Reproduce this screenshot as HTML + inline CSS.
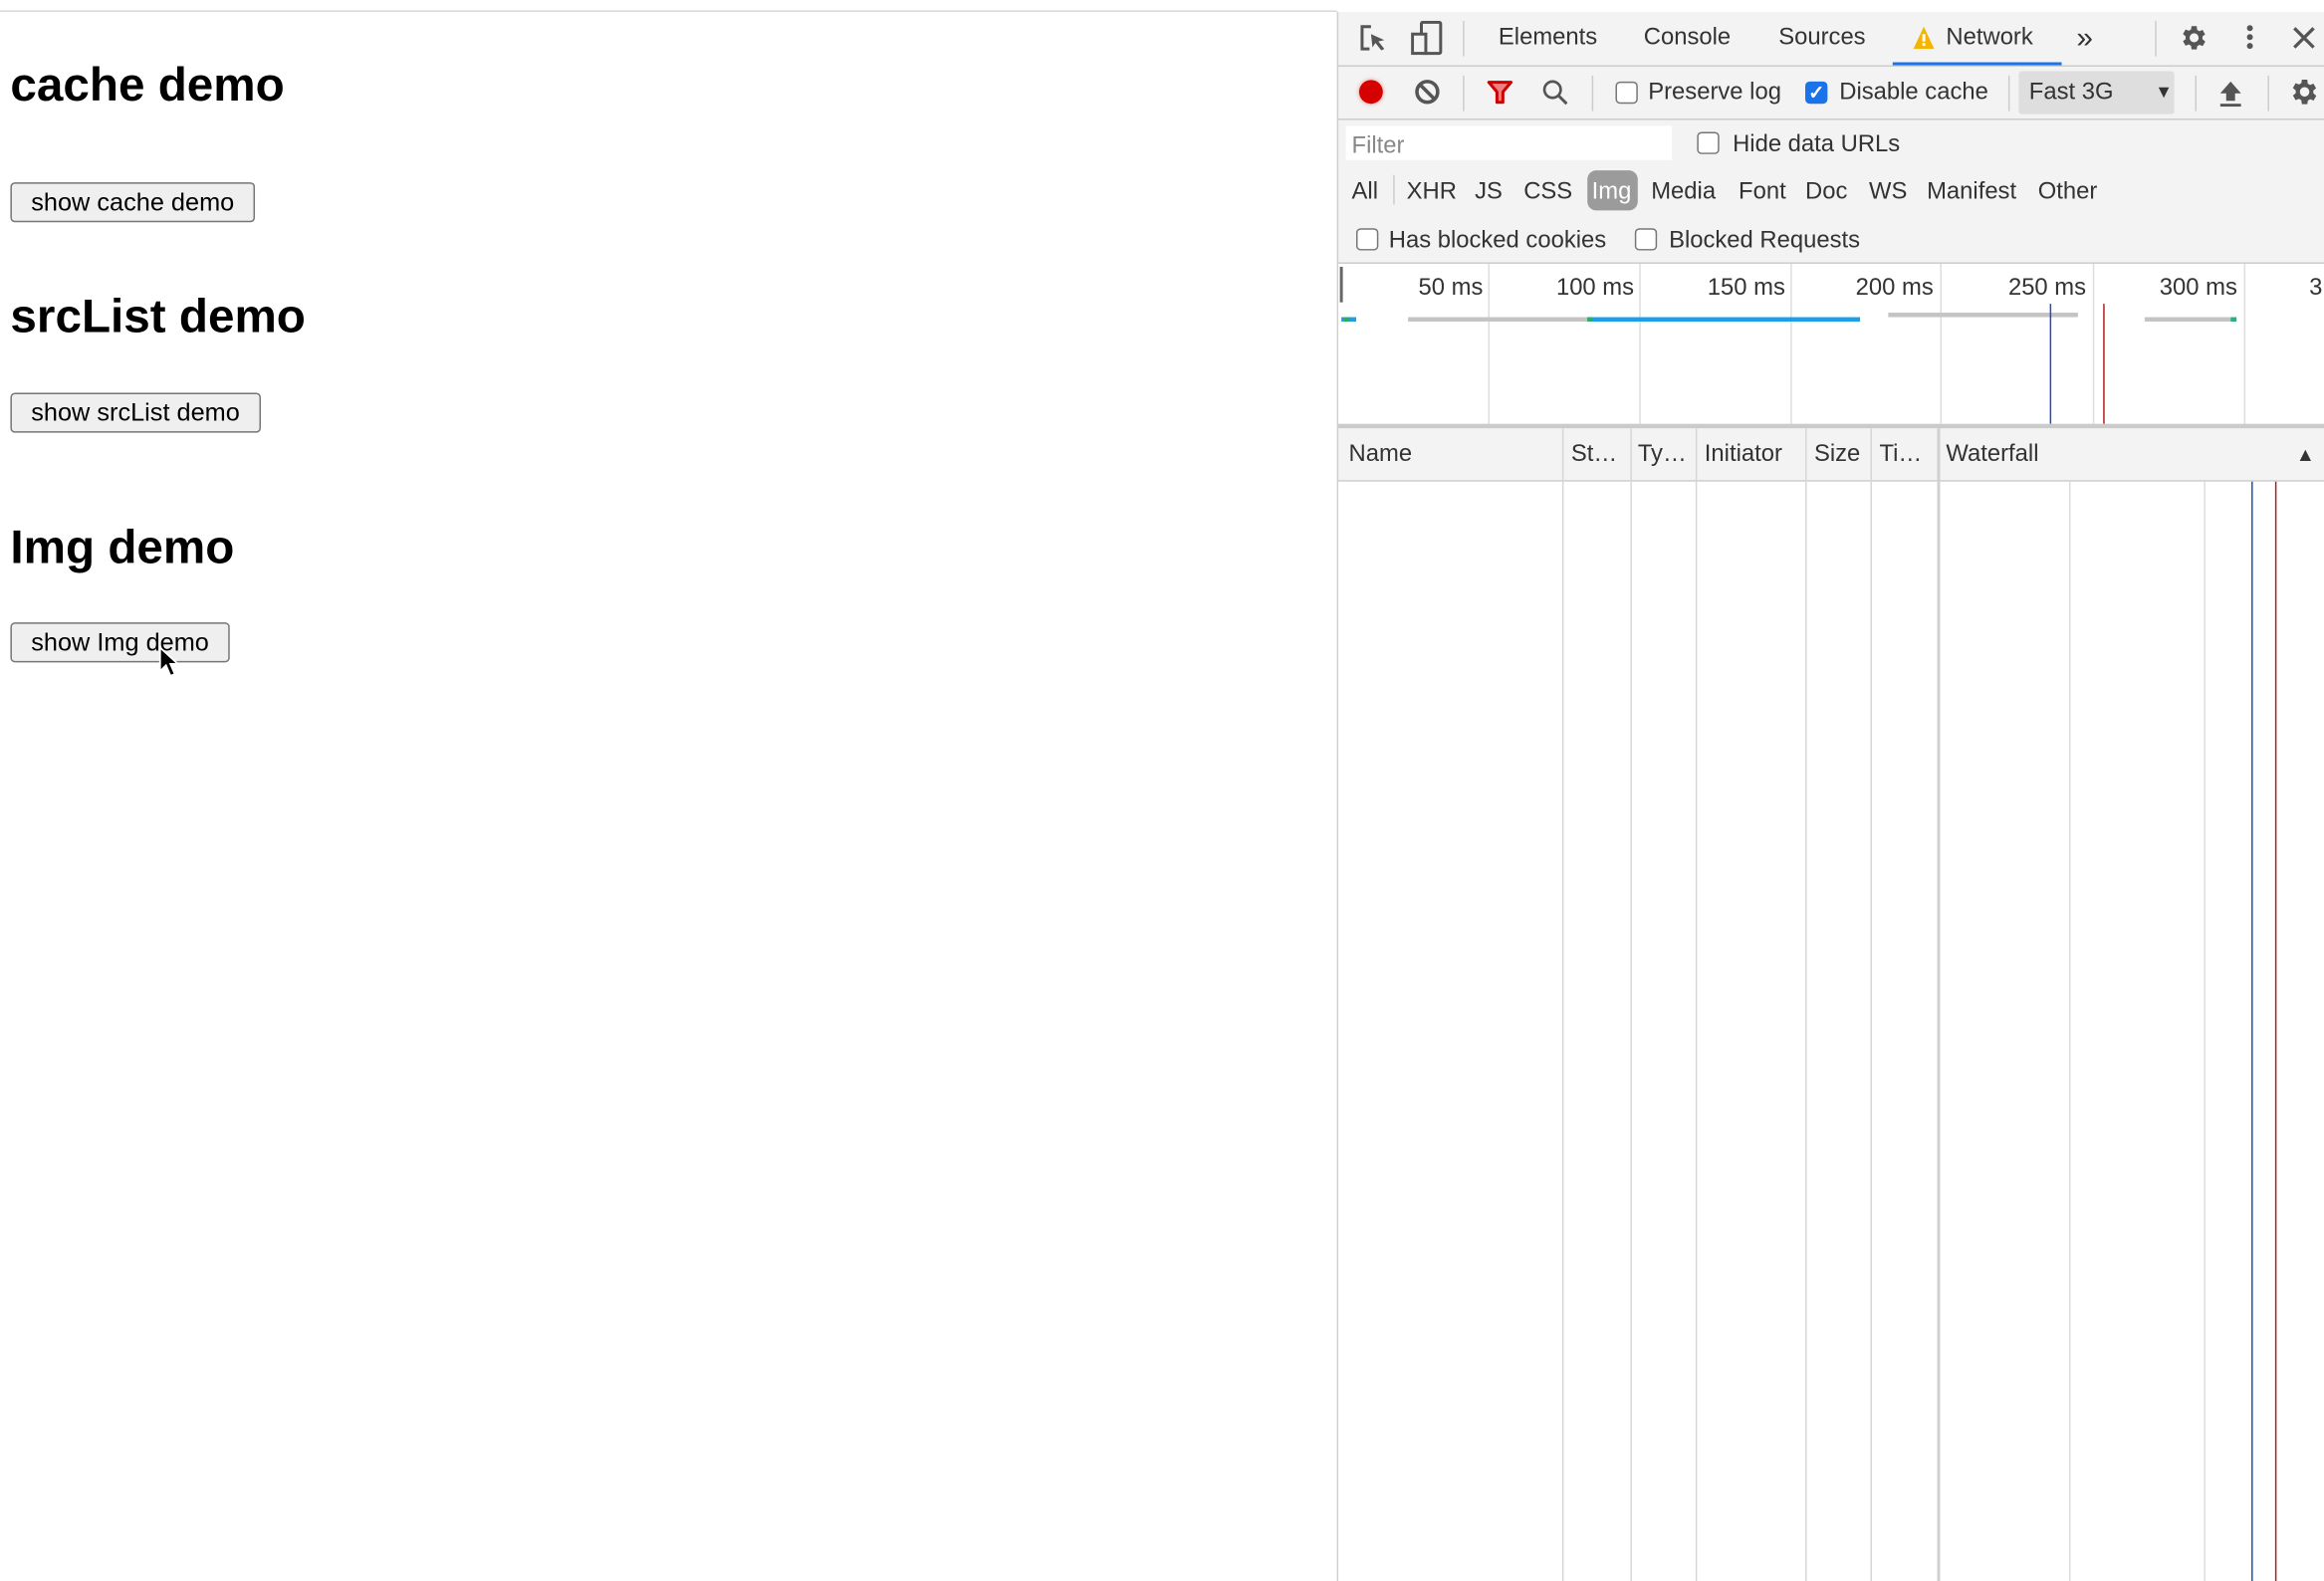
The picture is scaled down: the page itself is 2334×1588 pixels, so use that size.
<!DOCTYPE html>
<html><head><meta charset="utf-8">
<style>
html,body{margin:0;padding:0;background:#fff;overflow:hidden;width:2334px;height:1588px}
#w{position:absolute;left:0;top:0;width:1568px;height:1067px;transform:scale(1.48852);transform-origin:0 0;font-family:"Liberation Sans",Arial,sans-serif;}
.a{position:absolute;white-space:nowrap}
h1{position:absolute;margin:0;font-size:32px;font-weight:bold;left:7px;color:#000}
.btn{position:absolute;left:7px;height:25px;border:1px solid #767676;border-radius:3px;background:#efefef;font-size:17px;line-height:25px;padding:0 13px;box-sizing:content-box}
#dt{position:absolute;left:902px;top:8px;width:666px;height:1059px;background:#f3f3f3;border-left:1px solid #cfcfcf}
.t{position:absolute;font-size:16px;color:#333;white-space:nowrap;margin-top:1px}
.sep{position:absolute;width:1px;background:#ccc}
.cb{position:absolute;width:13px;height:13px;border:1px solid #767676;border-radius:3px;background:#fff}
.hl{position:absolute;left:0;width:666px;height:1px;background:#cbcbcb}
.vl{position:absolute;width:1px;background:#ddd}
</style></head><body>
<div id="w">
<div class="a" style="left:0;top:7px;width:902px;height:1px;background:#d6d6d6"></div>
<h1 style="top:39px">cache demo</h1>
<div class="btn" style="top:123px">show cache demo</div>
<h1 style="top:195px">srcList demo</h1>
<div class="btn" style="top:265px">show srcList demo</div>
<h1 style="top:351px">Img demo</h1>
<div class="btn" style="top:420px">show Img demo</div>
<svg class="a" style="left:107px;top:436px" width="16" height="24" viewBox="0 0 16 24"><path d="M1 1 L1 17 L5 13 L8 20 L11 19 L8 12 L13 12 Z" fill="#000" stroke="#fff" stroke-width="1.2"/></svg>

<div id="dt">
<svg class="a" style="left:14px;top:8px" width="20" height="20" viewBox="0 0 20 20"><path d="M8 2H2v15h5" fill="none" stroke="#555" stroke-width="2"/><path d="M8 7l9 4-4 1 4 5-2 1-4-5-2 3z" fill="#555"/></svg>
<svg class="a" style="left:49px;top:6px" width="22" height="24" viewBox="0 0 22 24"><rect x="7" y="1" width="13" height="21" rx="1" fill="none" stroke="#555" stroke-width="2"/><rect x="1" y="9" width="9" height="13" fill="#f3f3f3" stroke="#555" stroke-width="2"/></svg>
<div class="sep" style="left:84px;top:6px;height:24px"></div>
<div class="t" style="left:108px;top:8px">Elements</div>
<div class="t" style="left:206px;top:8px">Console</div>
<div class="t" style="left:297px;top:8px">Sources</div>
<svg class="a" style="left:388px;top:10px" width="14" height="15" viewBox="0 0 14 15"><path d="M7 0L14 15H0Z" fill="#f4b400"/><rect x="6" y="5" width="2" height="5" fill="#fff"/><rect x="6" y="11" width="2" height="2" fill="#fff"/></svg>
<div class="t" style="left:410px;top:8px">Network</div>
<div class="a" style="left:374px;top:34px;width:114px;height:2px;background:#1a73e8"></div>
<div class="t" style="left:498px;top:6px;font-size:20px">»</div>
<div class="sep" style="left:551px;top:6px;height:24px"></div>
<svg class="a" style="left:566px;top:7px" width="21" height="21" viewBox="0 0 24 24"><path fill="#555" d="M19.4 13a7.5 7.5 0 000-2l2.1-1.6-2-3.5-2.5 1a7.3 7.3 0 00-1.7-1L15 3h-4l-.4 2.6a7.3 7.3 0 00-1.7 1l-2.5-1-2 3.5L6.5 11a7.5 7.5 0 000 2l-2.1 1.6 2 3.5 2.5-1a7.3 7.3 0 001.7 1L11 21h4l.4-2.6a7.3 7.3 0 001.7-1l2.5 1 2-3.5zM13 15.5a3.5 3.5 0 110-7 3.5 3.5 0 010 7z"/></svg>
<div class="a" style="left:613px;top:9px;width:4px;height:4px;border-radius:2px;background:#555;box-shadow:0 6px 0 #555,0 12px 0 #555"></div>
<svg class="a" style="left:644px;top:10px" width="15" height="15" viewBox="0 0 15 15"><path d="M1 1L14 14M14 1L1 14" stroke="#555" stroke-width="2.2"/></svg>
<div class="hl" style="top:36px"></div>
<div class="a" style="left:14px;top:46px;width:16px;height:16px;border-radius:8px;background:#d50000;box-shadow:0 0 3px #f08080"></div>
<svg class="a" style="left:51px;top:45px" width="18" height="18" viewBox="0 0 18 18"><circle cx="9" cy="9" r="7" fill="none" stroke="#555" stroke-width="2.4"/><path d="M4 4L14 14" stroke="#555" stroke-width="2.4"/></svg>
<div class="sep" style="left:84px;top:43px;height:24px"></div>
<svg class="a" style="left:100px;top:46px" width="18" height="17" viewBox="0 0 18 17"><path d="M1.5 1.5h15L11 8v7H7V8z" fill="#f08080" stroke="#c00" stroke-width="2" stroke-linejoin="round"/></svg>
<svg class="a" style="left:137px;top:45px" width="19" height="19" viewBox="0 0 19 19"><circle cx="7.5" cy="7.5" r="5.5" fill="none" stroke="#555" stroke-width="1.8"/><path d="M11.5 11.5L17 17" stroke="#555" stroke-width="2"/></svg>
<div class="sep" style="left:171px;top:43px;height:24px"></div>
<div class="cb" style="left:187px;top:47px"></div>
<div class="t" style="left:209px;top:45px">Preserve log</div>
<div class="a" style="left:315px;top:47px;width:15px;height:15px;border-radius:3px;background:#1a73e8;color:#fff;font-size:13px;line-height:15px;text-align:center;font-weight:bold">✓</div>
<div class="t" style="left:338px;top:45px">Disable cache</div>
<div class="sep" style="left:452px;top:43px;height:24px"></div>
<div class="a" style="left:459px;top:40px;width:105px;height:29px;background:#dedede;border-radius:2px"></div>
<div class="t" style="left:466px;top:45px">Fast 3G</div>
<div class="t" style="left:551px;top:46px;font-size:12px">▼</div>
<div class="sep" style="left:578px;top:43px;height:24px"></div>
<svg class="a" style="left:594px;top:46px" width="16" height="18" viewBox="0 0 16 18"><path d="M8 1L15 9H11V14H5V9H1Z" fill="#555"/><rect x="1" y="16" width="14" height="2" fill="#555"/></svg>
<div class="sep" style="left:627px;top:43px;height:24px"></div>
<svg class="a" style="left:640px;top:43px" width="22" height="22" viewBox="0 0 24 24"><path fill="#555" d="M19.4 13a7.5 7.5 0 000-2l2.1-1.6-2-3.5-2.5 1a7.3 7.3 0 00-1.7-1L15 3h-4l-.4 2.6a7.3 7.3 0 00-1.7 1l-2.5-1-2 3.5L6.5 11a7.5 7.5 0 000 2l-2.1 1.6 2 3.5 2.5-1a7.3 7.3 0 001.7 1L11 21h4l.4-2.6a7.3 7.3 0 001.7-1l2.5 1 2-3.5zM13 15.5a3.5 3.5 0 110-7 3.5 3.5 0 010 7z"/></svg>
<div class="hl" style="top:72px"></div>
<div class="a" style="left:5px;top:77px;width:220px;height:23px;background:#fff"></div>
<div class="t" style="left:9px;top:81px;color:#888">Filter</div>
<div class="cb" style="left:242px;top:81px"></div>
<div class="t" style="left:266px;top:80px">Hide data URLs</div>
<div class="t" style="left:9px;top:112px">All</div>
<div class="sep" style="left:37px;top:110px;height:20px"></div>
<div class="t" style="left:46px;top:112px">XHR</div>
<div class="t" style="left:92px;top:112px">JS</div>
<div class="t" style="left:125px;top:112px">CSS</div>
<div class="a" style="left:168px;top:107px;width:34px;height:27px;border-radius:6px;background:#9b9b9b"></div>
<div class="t" style="left:171px;top:112px;color:#fff">Img</div>
<div class="t" style="left:211px;top:112px">Media</div>
<div class="t" style="left:270px;top:112px">Font</div>
<div class="t" style="left:315px;top:112px">Doc</div>
<div class="t" style="left:358px;top:112px">WS</div>
<div class="t" style="left:397px;top:112px">Manifest</div>
<div class="t" style="left:472px;top:112px">Other</div>
<div class="cb" style="left:12px;top:146px"></div>
<div class="t" style="left:34px;top:145px">Has blocked cookies</div>
<div class="cb" style="left:200px;top:146px"></div>
<div class="t" style="left:223px;top:145px">Blocked Requests</div>
<div class="hl" style="top:169px"></div>
<div class="a" style="left:0;top:170px;width:666px;height:108px;background:#fff"></div>
<div class="a" style="left:1px;top:172px;width:2px;height:24px;background:#666"></div>
<div class="vl" style="left:101px;top:170px;height:108px"></div>
<div class="vl" style="left:203px;top:170px;height:108px"></div>
<div class="vl" style="left:305px;top:170px;height:108px"></div>
<div class="vl" style="left:406px;top:170px;height:108px"></div>
<div class="vl" style="left:509px;top:170px;height:108px"></div>
<div class="vl" style="left:611px;top:170px;height:108px"></div>
<div class="t" style="left:54px;top:177px">50 ms</div>
<div class="t" style="left:147px;top:177px">100 ms</div>
<div class="t" style="left:249px;top:177px">150 ms</div>
<div class="t" style="left:349px;top:177px">200 ms</div>
<div class="t" style="left:452px;top:177px">250 ms</div>
<div class="t" style="left:554px;top:177px">300 ms</div>
<div class="t" style="left:655px;top:177px">3</div>
<div class="a" style="left:2px;top:206px;width:10px;height:3px;background:#1a9fe8"></div>
<div class="a" style="left:4px;top:206px;width:3px;height:3px;background:#2ab050"></div>
<div class="a" style="left:47px;top:206px;width:121px;height:3px;background:#c4c4c4"></div>
<div class="a" style="left:168px;top:206px;width:184px;height:3px;background:#1a9fe8"></div>
<div class="a" style="left:168px;top:206px;width:3px;height:3px;background:#2ab050"></div>
<div class="a" style="left:371px;top:203px;width:128px;height:3px;background:#c4c4c4"></div>
<div class="a" style="left:544px;top:206px;width:58px;height:3px;background:#c4c4c4"></div>
<div class="a" style="left:602px;top:206px;width:4px;height:3px;background:#2ab080"></div>
<div class="a" style="left:480px;top:197px;width:1px;height:81px;background:#1a4fc0"></div>
<div class="a" style="left:516px;top:197px;width:1px;height:81px;background:#b01c1c"></div>
<div class="a" style="left:0;top:278px;width:666px;height:3px;background:#cbcbcb"></div>
<div class="t" style="left:7px;top:289px">Name</div>
<div class="t" style="left:157px;top:289px">St…</div>
<div class="t" style="left:202px;top:289px">Ty…</div>
<div class="t" style="left:247px;top:289px">Initiator</div>
<div class="t" style="left:321px;top:289px">Size</div>
<div class="t" style="left:365px;top:289px">Ti…</div>
<div class="t" style="left:410px;top:289px">Waterfall</div>
<div class="t" style="left:646px;top:290px;font-size:13px">▲</div>
<div class="hl" style="top:316px"></div>
<div class="a" style="left:0;top:317px;width:666px;height:742px;background:#fff"></div>
<div class="vl" style="left:151px;top:281px;height:778px;background:#d6d6d6"></div>
<div class="vl" style="left:197px;top:281px;height:778px;background:#d6d6d6"></div>
<div class="vl" style="left:241px;top:281px;height:778px;background:#d6d6d6"></div>
<div class="vl" style="left:315px;top:281px;height:778px;background:#d6d6d6"></div>
<div class="vl" style="left:359px;top:281px;height:778px;background:#d6d6d6"></div>
<div class="vl" style="left:404px;top:281px;height:778px;width:2px;background:#d0d0d0"></div>
<div class="vl" style="left:493px;top:317px;height:742px"></div>
<div class="vl" style="left:584px;top:317px;height:742px"></div>
<div class="a" style="left:616px;top:317px;width:1px;height:742px;background:#1a4fc0"></div>
<div class="a" style="left:632px;top:317px;width:1px;height:742px;background:#b01c1c"></div>
</div>
</div>
</body></html>
